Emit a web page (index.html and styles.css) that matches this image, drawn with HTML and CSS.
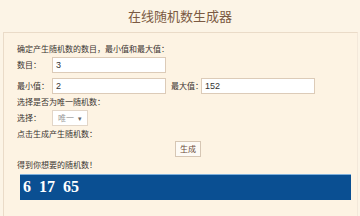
FILE: index.html
```html
<!doctype html>
<html lang="zh-CN">
<head>
	<meta charset="UTF-8" />
	<title>在线随机数生成器</title>
<link rel="stylesheet" href="styles.css">
</head>
<body>
	<div id="page">
		<h1 class="title">在线随机数生成器</h1>
		<div class="panel">
			<p class="tip">确定产生随机数的数目，最小值和最大值：</p>
			<div class="row">
				<label>数目：</label>
				<input type="text" class="txt" value="3" />
			</div>
			<div class="row">
				<label>最小值：</label>
				<input type="text" class="txt" value="2" />
				<label class="max">最大值：</label>
				<input type="text" class="txt" value="152" />
			</div>
			<p class="tip">选择是否为唯一随机数：</p>
			<div class="row">
				<label>选择：</label>
				<span class="sel">唯一 <i>▾</i></span>
			</div>
			<p class="tip">点击生成产生随机数：</p>
			<div class="btn-row">
				<a href="javascript:;" class="btn">生成</a>
			</div>
			<p class="tip">得到你想要的随机数！</p>
			<div class="result">6 17 65</div>
		</div>
	</div>
</body>
</html>
```

FILE: styles.css
```css
body,h1,p{
	margin: 0;
	padding: 0;
}
body{
	background: #fcf4e6;
	font-family: "Liberation Sans", "Noto Sans CJK SC", sans-serif;
	overflow: hidden;
}
#page{
	width: 360px;
	height: 216px;
	overflow: hidden;
}
.title{
	height: 32px;
	line-height: 32px;
	text-align: center;
	font-size: 13px;
	font-weight: normal;
	color: #7b5a42;
	font-family: "Noto Sans CJK SC", sans-serif;
}
.panel{
	margin-left: 3px;
	width: 340px;
	height: 183px;
	border: 1px solid #eadbc8;
	border-right-color: #f3e8da;
	border-bottom: none;
	background: #fdf3e3;
	padding-left: 13px;
	font-family: "Noto Sans CJK SC", sans-serif;
	font-size: 8px;
	color: #3a3430;
}
.panel .tip{
	height: 11px;
	line-height: 11px;
}
.panel .tip:first-child{
	margin-top: 10px;
}
.row{
	display: flex;
	align-items: center;
	height: 21px;
}
.row label{
	width: 35px;
	flex-shrink: 0;
	white-space: nowrap;
}
.row label.max{
	width: 30px;
	margin-left: 5px;
}
.txt{
	box-sizing: border-box;
	width: 114px;
	height: 16px;
	border: 1px solid #dccbb8;
	background: #fff;
	padding: 0 3px;
	font-family: "Liberation Sans", sans-serif;
	font-size: 9px;
	color: #333;
	outline: none;
}
.sel{
	box-sizing: border-box;
	width: 36px;
	height: 16px;
	line-height: 14px;
	border: 1px solid #e2d6c8;
	background: #fff;
	color: #999;
	padding-left: 5px;
}
.sel i{
	font-style: normal;
	font-size: 7px;
	color: #666;
	margin-left: 2px;
}
.btn-row{
	height: 20px;
	display: flex;
	justify-content: center;
	align-items: center;
}
.btn{
	box-sizing: border-box;
	width: 26px;
	height: 16px;
	line-height: 14px;
	text-align: center;
	border: 1px solid #d6c6b4;
	background: #fdfaf5;
	color: #6b4a3a;
	text-decoration: none;
	margin-left: 2px;
}
.result{
	margin: 4px 0 0 3px;
	width: 331px;
	height: 26px;
	box-sizing: border-box;
	border-top: 1px solid #7fb0dc;
	background: #0a4f92;
	color: #fff;
	font-family: "Liberation Serif", serif;
	font-weight: bold;
	font-size: 16px;
	line-height: 24px;
	padding-left: 3px;
	word-spacing: 4px;
}
```
